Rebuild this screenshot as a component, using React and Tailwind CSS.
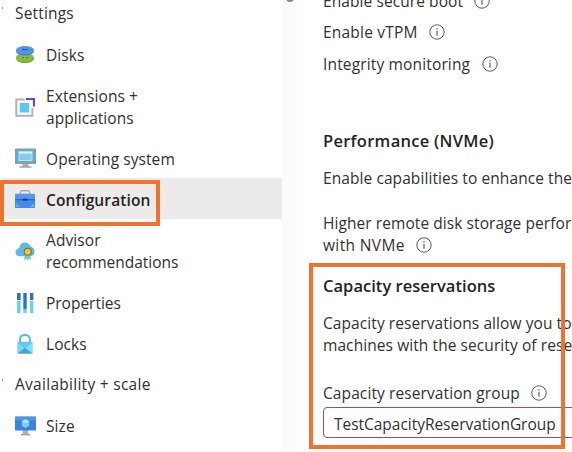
import React from "react";

function DisksIcon() {
  return (
    <svg width="20" height="20" viewBox="0 0 20 20">
      <ellipse cx="10" cy="13.8" rx="9" ry="4.2" fill="#6fa530" />
      <ellipse cx="10" cy="12.5" rx="9" ry="4.2" fill="#86bb3c" />
      <path d="M7 12.6h2M11 12.6h2" stroke="#5b8f29" strokeWidth="1.2" />
      <ellipse cx="10" cy="6.2" rx="9" ry="4.2" fill="#3f7fd6" />
      <ellipse cx="10" cy="5.2" rx="9" ry="4.1" fill="#5295e8" />
      <path d="M7 4.6h6" stroke="#2860ae" strokeWidth="1.3" />
    </svg>
  );
}

function ExtensionsIcon() {
  return (
    <svg width="20" height="20" viewBox="0 0 20 20">
      <path d="M9.5 2.5H1.3V18.8H17.4V11" fill="none" stroke="#b3b3b3" strokeWidth="2" />
      <rect x="4.7" y="6" width="9.5" height="9.5" fill="#5bc9ee" />
      <path d="M11 2H19V9.5" fill="none" stroke="#7540cf" strokeWidth="2.2" />
    </svg>
  );
}

function SystemIcon() {
  return (
    <svg width="21" height="20" viewBox="0 0 21 20">
      <path d="M8 15h5l1 4H7z" fill="#aaaeb1" />
      <path d="M4.5 18.3h12v1.4h-12z" fill="#9b9fa2" />
      <rect x="0" y="0.5" width="21" height="15.5" rx="0.5" fill="#8f9da4" />
      <rect x="1.2" y="1.7" width="18.6" height="12.8" fill="#5cafd2" />
      <rect x="4" y="3.7" width="13" height="8.7" fill="#88cde5" stroke="#d5edf5" strokeWidth="0.8" />
      <path d="M4 4h13v1.6H4z" fill="#e0f2f8" />
    </svg>
  );
}

function ToolboxIcon() {
  return (
    <svg width="20" height="20" viewBox="0 0 20 20">
      <path d="M5.5 5.5V3.3q0-1.5 1.5-1.5h6q1.5 0 1.5 1.5v2.2" fill="none" stroke="#aaa" strokeWidth="1.4" />
      <rect x="0" y="4.7" width="20" height="14.3" rx="0.8" fill="#4389e5" />
      <path d="M0 5h20v5H0z" fill="#5797ea" />
      <path d="M0 10h20v1.3H0z" fill="#2a69c9" />
      <rect x="7.5" y="9.6" width="5" height="2" fill="#153d80" />
      <path d="M1 14l4 4H1zM19 14l-4 4h4z" fill="#73a9f2" />
    </svg>
  );
}

function AdvisorIcon() {
  return (
    <svg width="20" height="20" viewBox="0 0 20 20">
      <path d="M4.8 15.3C2.2 15.3.5 13.6.5 11.3S2.2 7.4 4.4 7C4.6 3.7 7 1.5 10 1.5c2.7 0 4.9 1.7 5.6 4.3 2.3.2 3.9 2 3.9 4.5 0 2.8-1.8 5-4.5 5z" fill="#5bbbe3" />
      <path d="M10 13l-1 6 2.4-1.2L13 19.5V14zM15 13l1 6-2-1.2-1 1.7V14z" fill="#65d3bd" />
      <circle cx="12.7" cy="10.7" r="4" fill="#776940" />
      <circle cx="12.7" cy="10.7" r="3" fill="#ffc229" />
    </svg>
  );
}

function PropertiesIcon() {
  return (
    <svg width="18" height="22" viewBox="0 0 18 22">
      <path d="M1 1h3.6v7H1zM7.3 1h3.4v16.5H7.3zM14 1h3.4v7H14z" fill="#2f6fcf" />
      <path d="M1 9h3.6v12H1zM7.3 18h3.4v3H7.3zM14 9h3.4v12H14z" fill="#6bcdf1" />
    </svg>
  );
}

function LockIcon() {
  return (
    <svg width="16" height="20" viewBox="1 1 16 20.5">
      <path d="M4 11V6.5C4 3.8 6 2 9 2s5 1.8 5 4.5V11" fill="none" stroke="#58bde2" strokeWidth="2.1" />
      <rect x="1.3" y="9.3" width="15.4" height="11.7" rx="0.8" fill="#60c9ec" />
      <path d="M1.5 10L9 15.5 1.5 21z" fill="#7ed8f4" />
      <path d="M16.7 10L9 15.5l7.7 5.5z" fill="#83e1fb" />
      <path d="M1.5 21L9 15l7.6 6z" fill="#45a5cc" />
    </svg>
  );
}

function SizeIcon() {
  return (
    <svg width="21" height="20" viewBox="0 0 21 20">
      <path d="M8 14h5l.7 4.5H7.3z" fill="#b0b3b6" />
      <path d="M6 18h9v1.4H6z" fill="#999da0" />
      <rect x="0" y="0.5" width="21" height="14" rx="0.6" fill="#3f80df" />
      <path d="M0 .8h21v3.5H0z" fill="#5591e4" />
      <path d="M10.5 3.2l3.7 2v4.5l-3.7 2.2-3.7-2.2V5.2z" fill="#72d2ef" />
      <path d="M10.5 3.2l3.7 2-3.7 2.2-3.7-2.2z" fill="#a8e9f8" />
    </svg>
  );
}

function Info() {
  return (
    <svg width="16" height="16" viewBox="0 0 16 16" className="shrink-0">
      <circle cx="8" cy="8" r="7.2" fill="none" stroke="#5b5b5b" strokeWidth="1" />
      <path d="M8 6.7v5" stroke="#555" strokeWidth="1.1" />
      <path d="M8 4.2v1.3" stroke="#555" strokeWidth="1.2" />
    </svg>
  );
}

function Item({ icon, height, active, children }) {
  return (
    <div className={`flex items-center pl-3 ${height} ${active ? "bg-[#edebe9]" : ""}`}>
      <span className="flex w-[22px] shrink-0 justify-center">{icon}</span>
      <div className="pl-2.5">{children}</div>
    </div>
  );
}

export default function App() {
  return (
    <div className="relative flex h-[452px] w-[572px] overflow-hidden bg-white font-['Open_Sans','Noto_Sans',sans-serif] text-[15.5px] leading-[22px] whitespace-nowrap text-[#323130]">
      <nav className="w-[282px] shrink-0 pl-0.5">
        <div className="flex h-[34px] pt-0.5 pl-[13px] tracking-[0.17px]">Settings</div>
        <Item height="h-[41px]" icon={<DisksIcon />}><p className="tracking-[0.05px]">Disks</p></Item>
        <Item height="h-[63px]" icon={<ExtensionsIcon />}>
          <p className="tracking-[0.1px]">Extensions +</p>
          <p className="tracking-[0.05px]">applications</p>
        </Item>
        <Item height="h-[40px]" icon={<SystemIcon />}><p className="pt-0.5 tracking-[0.07px]">Operating system</p></Item>
        <Item height="h-[41px]" active icon={<ToolboxIcon />}><p className="pt-[3px] font-semibold tracking-[0.12px] text-[#252423]">Configuration</p></Item>
        <Item height="h-[64px]" icon={<AdvisorIcon />}>
          <p className="tracking-[0.1px]">Advisor</p>
          <p>recommendations</p>
        </Item>
        <Item height="h-[40px]" icon={<PropertiesIcon />}><p className="tracking-[-0.02px]">Properties</p></Item>
        <Item height="h-[41px]" icon={<LockIcon />}><p className="tracking-[0.05px]">Locks</p></Item>
        <div className="flex h-[41px] items-center pb-0.5 pl-[13px] tracking-[0.28px]">Availability + scale</div>
        <Item height="h-[41px]" icon={<SizeIcon />}><p className="tracking-[0.1px]">Size</p></Item>
      </nav>

      <div className="flex w-[15px] shrink-0 justify-center bg-[#fbfbfb]">
        <div className="-mt-1.5 h-2 w-2 rounded-full bg-[#858585]" />
      </div>

      <main className="w-0 grow pl-[26px]">
        <div className="-mt-[10px] flex h-[22px] items-center gap-[11px]"><span className="tracking-[0.08px]">Enable secure boot</span><Info /></div>
        <div className="mt-[9px] flex h-[22px] items-center gap-[11px]"><span className="tracking-[0.2px]">Enable vTPM</span><Info /></div>
        <div className="mt-2.5 flex h-[22px] items-center gap-3"><span className="tracking-[0.15px]">Integrity monitoring</span><Info /></div>
        <h2 className="mt-[55px] text-[16.5px] font-semibold tracking-[0.28px] text-[#252423]">Performance (NVMe)</h2>
        <p className="mt-[15px] tracking-[0.08px]">Enable capabilities to enhance the</p>
        <p className="mt-[23px] tracking-[0.07px]">Higher remote disk storage performance</p>
        <div className="flex h-[22px] items-center gap-[11px]"><span className="tracking-[0.36px]">with NVMe</span><Info /></div>
        <h2 className="mt-[19px] text-[16.5px] font-semibold tracking-[0.03px] text-[#252423]">Capacity reservations</h2>
        <p className="mt-[15px] tracking-[0.08px]">Capacity reservations allow you to</p>
        <p className="tracking-[0.08px]">machines with the security of reserved</p>
        <div className="mt-[26px] flex h-[22px] items-center gap-[11px]"><span className="tracking-[0.1px]">Capacity reservation group</span><Info /></div>
        <div className="mt-[3px] flex h-[31px] w-[270px] items-center rounded-sm border border-[#8d48ab] pt-0.5 pl-2.5 tracking-[-0.03px]">TestCapacityReservationGroup</div>
      </main>

      <div className="absolute top-[180px] left-0 h-[46px] w-[160px] border-4 border-[#ed7331]" />
      <div className="absolute top-[263px] left-[309px] h-[186px] w-[256px] border-4 border-[#ed7331]" />
      <div className="absolute top-[7px] left-0.5 h-0.5 w-px bg-[#999]" />
      <div className="absolute top-[379px] left-0.5 h-0.5 w-px bg-[#999]" />
    </div>
  );
}
